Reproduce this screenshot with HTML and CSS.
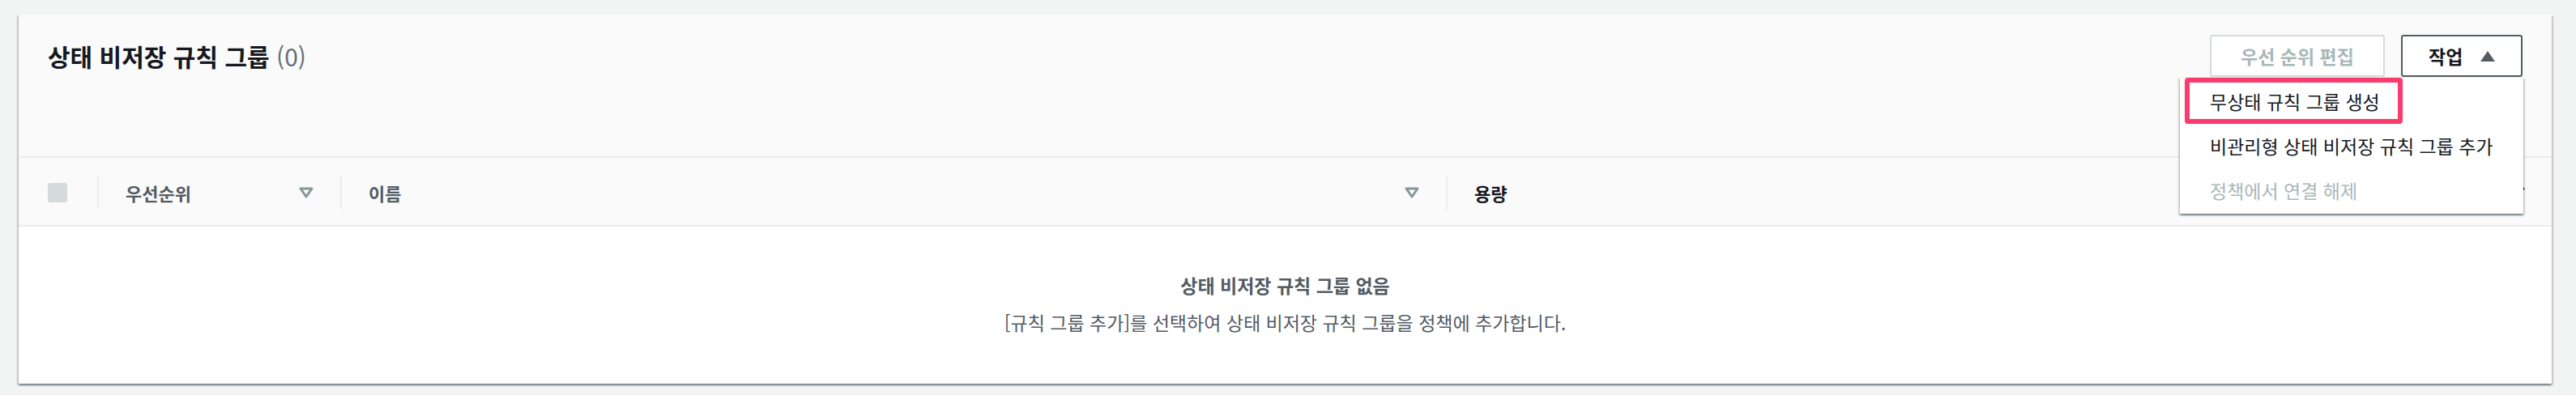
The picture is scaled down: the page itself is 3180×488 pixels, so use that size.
FILE: index.html
```html
<!DOCTYPE html>
<html lang="ko">
<head>
<meta charset="utf-8">
<title>상태 비저장 규칙 그룹</title>
<link rel="stylesheet" href="styles.css">
</head>
<body>
<div class="page">
  <section class="card">
    <header class="card-header">
      <h2 class="title">상태 비저장 규칙 그룹 <span class="count">(0)</span></h2>
      <div class="actions">
        <button class="btn btn-disabled" type="button">우선 순위 편집</button>
        <div class="menu-wrap">
          <button class="btn btn-normal" type="button">작업 <span class="caret-up"></span></button>
          <div class="dropdown">
            <div class="highlight"></div>
            <div class="item">무상태 규칙 그룹 생성</div>
            <div class="item">비관리형 상태 비저장 규칙 그룹 추가</div>
            <div class="item item-disabled">정책에서 연결 해제</div>
          </div>
        </div>
      </div>
    </header>
    <div class="thead">
      <div class="th th-check"><span class="checkbox"></span></div>
      <div class="th th-sep"><span class="label">우선순위</span><svg class="sort" width="18" height="14" viewBox="0 0 18 14"><polygon points="2,2 16,2 9,12" fill="none" stroke="#879596" stroke-width="3" stroke-linejoin="round"/></svg></div>
      <div class="th th-sep"><span class="label">이름</span><svg class="sort" width="18" height="14" viewBox="0 0 18 14"><polygon points="2,2 16,2 9,12" fill="none" stroke="#879596" stroke-width="3" stroke-linejoin="round"/></svg></div>
      <div class="th th-sep th-last"><span class="label label-active">용량</span><svg class="sort" width="18" height="14" viewBox="0 0 18 14"><polygon points="2,2 16,2 9,12" fill="#16191f" stroke="#16191f" stroke-width="3" stroke-linejoin="round"/></svg></div>
    </div>
    <div class="tbody">
      <p class="empty-title">상태 비저장 규칙 그룹 없음</p>
      <p class="empty-text">[규칙 그룹 추가]를 선택하여 상태 비저장 규칙 그룹을 정책에 추가합니다.</p>
    </div>
  </section>
</div>
</body>
</html>
```

FILE: styles.css
```css
* { box-sizing: border-box; }
html, body { margin: 0; padding: 0; }
body {
  background: #f2f3f3;
  font-family: "Noto Sans CJK KR", "Noto Sans", sans-serif;
  color: #16191f;
  width: 3180px;
  height: 488px;
  overflow: hidden;
}
.page {
  padding: 18px 30px 0 23px;
}
.card {
  background: #fafafa;
  box-shadow: 0 2px 2px 0 rgba(0, 28, 36, 0.35), 2px 2px 2px 0 rgba(0, 28, 36, 0.15), -2px 2px 2px 0 rgba(0, 28, 36, 0.15);
}
.card-header {
  height: 175px;
  display: flex;
  justify-content: space-between;
  align-items: flex-start;
  padding: 25px 36px 0 36px;
}
.title {
  margin: 0;
  font-size: 30px;
  line-height: 52px;
  font-weight: 700;
  color: #16191f;
}
.count {
  color: #687078;
  font-weight: 400;
}
.actions {
  display: flex;
  gap: 20px;
  align-items: flex-start;
}
.btn {
  height: 52px;
  border-radius: 3px;
  border: 2px solid #545b64;
  background: #ffffff;
  font-family: inherit;
  font-size: 23px;
  font-weight: 700;
  display: flex;
  align-items: center;
  justify-content: center;
  padding: 0;
}
.btn-disabled {
  width: 216px;
  border-color: #d5dbdb;
  color: #aab7b8;
}
.btn-normal {
  width: 150px;
  color: #16191f;
  justify-content: flex-start;
  padding-left: 32px;
  gap: 22px;
}
.caret-up {
  width: 0;
  height: 0;
  border-left: 9px solid transparent;
  border-right: 9px solid transparent;
  border-bottom: 13px solid #545b64;
}
.menu-wrap {
  position: relative;
}
.dropdown {
  position: absolute;
  top: 100%;
  right: -1px;
  width: 424px;
  background: #ffffff;
  padding: 2px 0;
  border-top: 1px solid #eaeded;
  box-shadow: 0 2px 2px 0 rgba(0, 28, 36, 0.35), 2px 2px 2px 0 rgba(0, 28, 36, 0.15), -2px 2px 2px 0 rgba(0, 28, 36, 0.15);
  z-index: 5;
}
.item {
  height: 55px;
  line-height: 55px;
  padding-left: 37px;
  font-size: 23px;
  color: #16191f;
  white-space: nowrap;
}
.item-disabled {
  color: #aab7b8;
  height: 54px;
  line-height: 54px;
}
.highlight {
  position: absolute;
  left: 6px;
  top: 0;
  width: 269px;
  height: 57px;
  border: 6px solid #fb3a6d;
  border-radius: 4px;
}
.thead {
  display: grid;
  grid-template-columns: 97px 300px 1365px 1fr;
  border-top: 2px solid #eaeded;
  border-bottom: 2px solid #eaeded;
  padding: 21px 0 19px;
  background: #fafafa;
}
.th {
  height: 43px;
  display: flex;
  align-items: center;
  justify-content: space-between;
}
.th-check {
  padding-left: 36px;
}
.th-sep {
  border-left: 2px solid #eaeded;
  padding: 0 33px 0 33px;
}
.th-last {
  padding-right: 33px;
}
.checkbox {
  width: 24px;
  height: 24px;
  border-radius: 3px;
  background: #d5dbdb;
}
.label {
  font-size: 22px;
  font-weight: 700;
  color: #545b64;
}
.label-active {
  color: #16191f;
}
.sort {
  display: block;
}
.tbody {
  height: 194px;
  background: #ffffff;
  padding-top: 49px;
  text-align: center;
}
.empty-title, .empty-text {
  margin: 0;
  font-size: 23px;
  line-height: 46px;
  color: #545b64;
}
.empty-title {
  font-weight: 700;
}
```
